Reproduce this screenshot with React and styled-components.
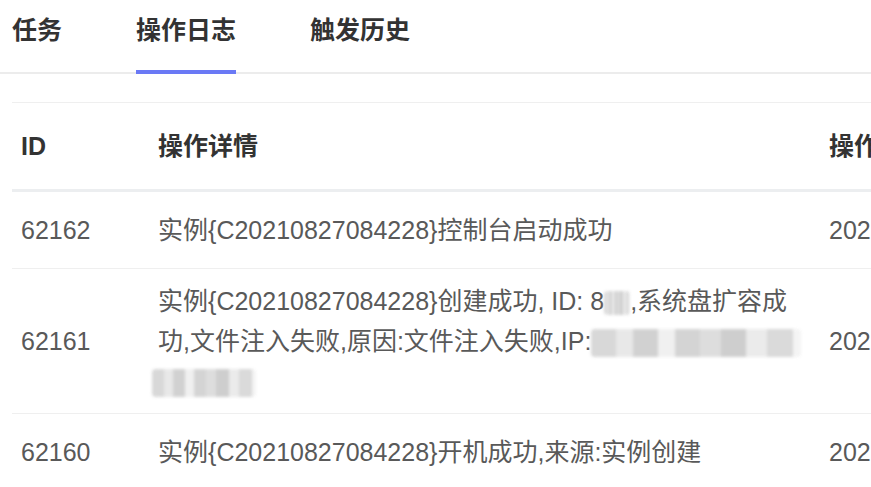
import React from "react";
import styled, { createGlobalStyle } from "styled-components";

const Global = createGlobalStyle`
  html, body { margin: 0; padding: 0; background: #fff; }
  body {
    font-family: "Liberation Sans", "Noto Sans CJK SC", sans-serif;
    overflow: hidden;
    width: 871px;
    height: 487px;
  }
`;

const Page = styled.div`
  width: 871px;
  height: 487px;
  overflow: hidden;
  background: #fff;
`;

const TabBar = styled.div`
  display: flex;
  gap: 74px;
  padding-left: 12px;
  border-bottom: 2px solid #ececec;
  height: 72px;
`;

const Tab = styled.div`
  position: relative;
  font-size: 25px;
  font-weight: 600;
  color: #333;
  line-height: 36px;
  padding-top: 12px;
  white-space: nowrap;

  ${(p) =>
    p.$active &&
    `
    &::after {
      content: "";
      position: absolute;
      left: 0;
      right: 0;
      bottom: -2px;
      height: 4px;
      background: #6a79f5;
    }
  `}
`;

const Table = styled.div`
  margin: 28px 0 0 12px;
  border-top: 1px solid #efefef;
  width: 1000px;
`;

const Row = styled.div`
  display: grid;
  grid-template-columns: 137px 671px 1fr;
  align-items: center;
  min-height: ${(p) => (p.$head ? "86px" : "76px")};
  border-bottom: ${(p) => (p.$head ? "3px solid #eceef0" : "1px solid #efefef")};
`;

const Cell = styled.div`
  padding: 12px 9px;
  font-size: 25px;
  line-height: 40px;
  color: ${(p) => (p.$head ? "#333" : "#595959")};
  font-weight: ${(p) => (p.$head ? 600 : 400)};
  white-space: nowrap;
`;

const Redacted = styled.span`
  display: inline-block;
  vertical-align: middle;
  width: ${(p) => p.$w}px;
  height: ${(p) => p.$h || 26}px;
  margin-left: ${(p) => p.$ml || 0}px;
  border-radius: 4px;
  background:
    linear-gradient(90deg,
      #d4d4d4 0 12%, #e6e6e6 12% 20%, #cdcdcd 20% 32%, #efefef 32% 40%,
      #d0d0d0 40% 52%, #dadada 52% 62%, #c9c9c9 62% 74%, #e9e9e9 74% 84%,
      #d6d6d6 84% 96%, #f3f3f3 96% 100%);
  filter: blur(1.5px);
  opacity: 0.9;
`;

const rows = [
  {
    id: "62162",
    detail: <>实例{"{"}C20210827084228{"}"}控制台启动成功</>,
  },
  {
    id: "62161",
    detail: (
      <>
        实例{"{"}C20210827084228{"}"}创建成功, ID: 8<Redacted $w={26} $h={24} />,系统盘扩容成
        <br />
        功,文件注入失败,原因:文件注入失败,IP:<Redacted $w={210} $h={28} />
        <br />
        <Redacted $w={104} $h={28} $ml={-6} />
      </>
    ),
  },
  {
    id: "62160",
    detail: <>实例{"{"}C20210827084228{"}"}开机成功,来源:实例创建</>,
  },
];

export default function App() {
  return (
    <Page>
      <Global />
      <TabBar>
        <Tab>任务</Tab>
        <Tab $active>操作日志</Tab>
        <Tab>触发历史</Tab>
      </TabBar>
      <Table>
        <Row $head>
          <Cell $head>ID</Cell>
          <Cell $head>操作详情</Cell>
          <Cell $head>操作时间</Cell>
        </Row>
        {rows.map((r) => (
          <Row key={r.id}>
            <Cell>{r.id}</Cell>
            <Cell>{r.detail}</Cell>
            <Cell>2021-08-27 08:42:28</Cell>
          </Row>
        ))}
      </Table>
    </Page>
  );
}
